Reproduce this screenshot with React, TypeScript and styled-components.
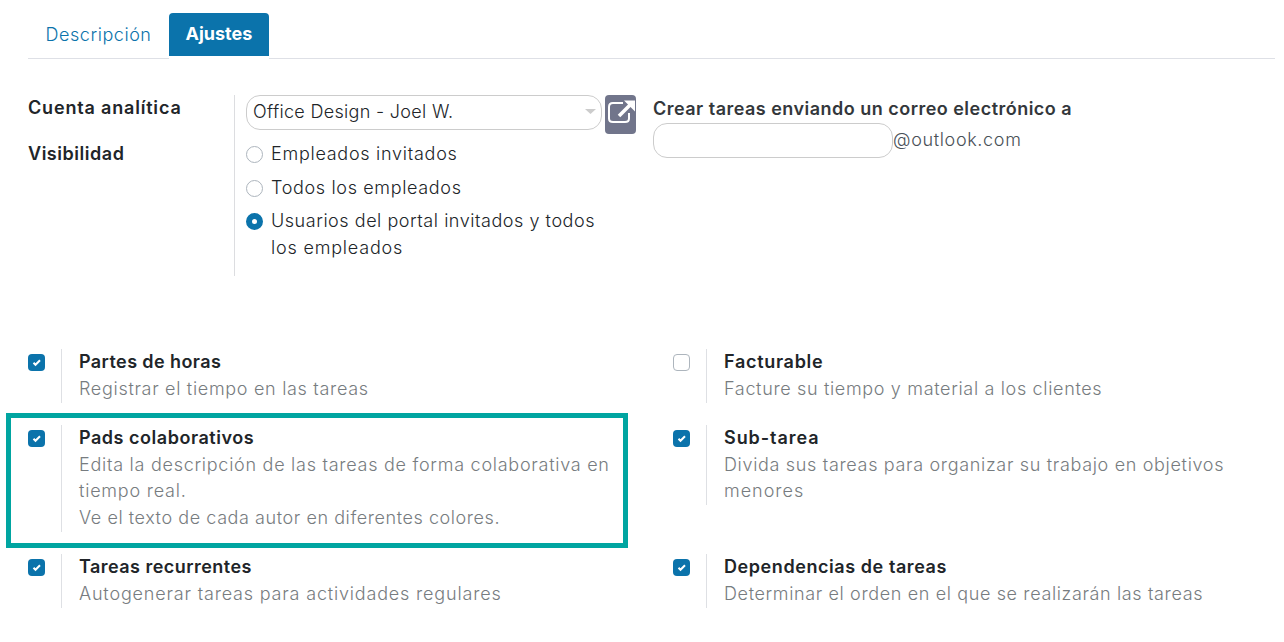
import React from 'react';
import styled, { createGlobalStyle, css } from 'styled-components';

const Global = createGlobalStyle`
  * { box-sizing: border-box; }
  body { margin: 0; background: #fff; color: #212529; font: 340 18px/26.7px Inter, "Open Sans", sans-serif; }
`;
const Page = styled.main`width: 1284px; height: 642px; padding: 13px 9px 0 28px; overflow: hidden;`;

const Text = styled.span<{ $spacing: number }>`
  letter-spacing: ${p => p.$spacing}px; white-space: nowrap;
`;
const Tabs = styled.nav`display: flex; height: 46px;`;
const tabBase = css`border-bottom: 1px solid #dee0e6;`;
const Tab = styled.div`${tabBase} width: 141px; padding: 9px 0 0 17.5px; color: #0b73ab;`;
const ActiveTab = styled.div`
  width: 100px; height: 43px; padding: 8px 0 0 16.5px; background: #0b73ab; color: #fff;
  font-weight: 700; border-radius: 4px 4px 0 0;
`;
const TabFill = styled.div`${tabBase} flex: 1;`;

const Form = styled.section`display: flex; margin-top: 36px; height: 181px;`;
const Labels = styled.div`width: 206px; display: flex; flex-direction: column; gap: 19px; font-weight: 600;`;
const Fields = styled.div`width: 419px; border-left: 1px solid #dcdde0; padding-left: 11px;`;
const FieldRow = styled.div`display: flex; gap: 3px; height: 39px;`;
const Select = styled.div`
  width: 356px; height: 35px; border: 1px solid #ccc; border-radius: 14px; padding: 3px 6px;
  display: flex; justify-content: space-between;
  svg { margin-top: 5px; margin-right: -1px; }
`;
const LinkButton = styled.button`
  width: 31px; height: 39px; border: 0; border-radius: 4px; background: #71758b; padding: 0; display: block;
  svg { display: block; }
`;
const Radios = styled.div`display: flex; flex-direction: column; gap: 6.8px; margin-top: 7px;`;
const RadioRow = styled.label`display: flex; gap: 8px;`;
const Radio = styled.i<{ $on?: boolean }>`
  width: 17px; height: 17px; margin-top: 5px; border-radius: 50%;
  border: ${p => (p.$on ? '6px solid #0b73ab' : '1px solid #adb5bd')};
`;
const Mail = styled.div`color: #33373b;`;
const MailTitle = styled.div`font-weight: 600; height: 28px; padding-top: 1px;`;
const MailRow = styled.div`display: flex; color: #495057; line-height: 33px;`;
const Input = styled.div`width: 240px; height: 35px; border: 1px solid #ccc; border-radius: 14px;`;

const Settings = styled.section`
  display: grid; grid-template-columns: 645px 1fr; row-gap: 22px; margin-top: 73px; align-items: start;
`;
const Setting = styled.article`position: relative; display: flex;`;
const Check = styled.i<{ $on?: boolean }>`
  width: 17px; height: 17px; margin: 5px 16px 0 0; border-radius: 4px; display: block;
  border: ${p => (p.$on ? '0' : '1px solid #adb5bd')}; background: ${p => (p.$on ? '#0b73ab' : '#fff')};
  svg { display: block; }
`;
const Body = styled.div`border-left: 1px solid #dee0e4; padding-left: 17px;`;
const Title = styled.h3`margin: 0; font: inherit; font-weight: 600; height: 27px;`;
const Desc = styled.p`margin: 0; color: #777c80; display: flex; flex-direction: column;`;
const Highlight = styled.div`
  position: absolute; left: -22px; top: -12px; width: 622px; height: 135px; border: 5px solid #00a5a1;
`;

// A line of text and its letter spacing in pixels.
type Line = [string, number];
const T = ({ l }: { l: Line }) => <Text $spacing={l[1]}>{l[0]}</Text>;

const settings: { on: boolean; title: Line; lines: Line[]; mark?: boolean }[] = [
  { on: true, title: ['Partes de horas', 0.41], lines: [['Registrar el tiempo en las tareas', 0.69]] },
  { on: false, title: ['Facturable', 0.7], lines: [['Facture su tiempo y material a los clientes', 0.66]] },
  {
    on: true,
    mark: true,
    title: ['Pads colaborativos', 0.53],
    lines: [
      ['Edita la descripción de las tareas de forma colaborativa en', 0.73],
      ['tiempo real.', 0.78],
      ['Ve el texto de cada autor en diferentes colores.', 0.57],
    ],
  },
  {
    on: true,
    title: ['Sub-tarea', 0.94],
    lines: [['Divida sus tareas para organizar su trabajo en objetivos', 0.67], ['menores', 0.99]],
  },
  { on: true, title: ['Tareas recurrentes', 0.46], lines: [['Autogenerar tareas para actividades regulares', 0.82]] },
  {
    on: true,
    title: ['Dependencias de tareas', 0.57],
    lines: [['Determinar el orden en el que se realizarán las tareas', 0.63]],
  },
];

const ExternalIcon = () => (
  <svg width="31" height="39" viewBox="0 0 31 39" fill="none" stroke="#fff">
    <path d="M18 8H8Q4 8 4 12V23.500Q4 27 8 27H20Q24 27 24 23.500V18" strokeWidth="2" />
    <path d="M14 21L26 9" strokeWidth="3.500" />
    <path d="M19 5.500H30V16.500Z" fill="#fff" stroke="none" />
  </svg>
);

export default function App() {
  return (
    <Page>
      <Global />
      <Tabs>
        <Tab><T l={['Descripción', 0.55]} /></Tab>
        <ActiveTab><T l={['Ajustes', 0]} /></ActiveTab>
        <TabFill />
      </Tabs>
      <Form>
        <Labels><T l={['Cuenta analítica', 0.82]} /><T l={['Visibilidad', 0.53]} /></Labels>
        <Fields>
          <FieldRow>
            <Select>
              <T l={['Office Design - Joel W.', 0.31]} />
              <svg width="12" height="12" viewBox="0 0 12 12"><path d="M1 5h11l-5.500 5z" fill="#ccc" /></svg>
            </Select>
            <LinkButton><ExternalIcon /></LinkButton>
          </FieldRow>
          <Radios>
            <RadioRow><Radio /><T l={['Empleados invitados', 0.73]} /></RadioRow>
            <RadioRow><Radio /><T l={['Todos los empleados', 0.65]} /></RadioRow>
            <RadioRow>
              <Radio $on />
              <div><T l={['Usuarios del portal invitados y todos', 0.54]} /><br /><T l={['los empleados', 0.8]} /></div>
            </RadioRow>
          </Radios>
        </Fields>
        <Mail>
          <MailTitle><T l={['Crear tareas enviando un correo electrónico a', 0.48]} /></MailTitle>
          <MailRow><Input /><T l={['@outlook.com', 0.65]} /></MailRow>
        </Mail>
      </Form>
      <Settings>
        {settings.map(s => (
          <Setting key={s.title[0]}>
            <Check $on={s.on}>
              {s.on && (
                <svg width="17" height="17" viewBox="0 0 17 17">
                  <path d="M5.500 8.800l2 2 4.500-4.500" fill="none" stroke="#fff" strokeWidth="2" />
                </svg>
              )}
            </Check>
            <Body>
              <Title><T l={s.title} /></Title>
              <Desc>{s.lines.map(l => <T key={l[0]} l={l} />)}</Desc>
            </Body>
            {s.mark && <Highlight />}
          </Setting>
        ))}
      </Settings>
    </Page>
  );
}
